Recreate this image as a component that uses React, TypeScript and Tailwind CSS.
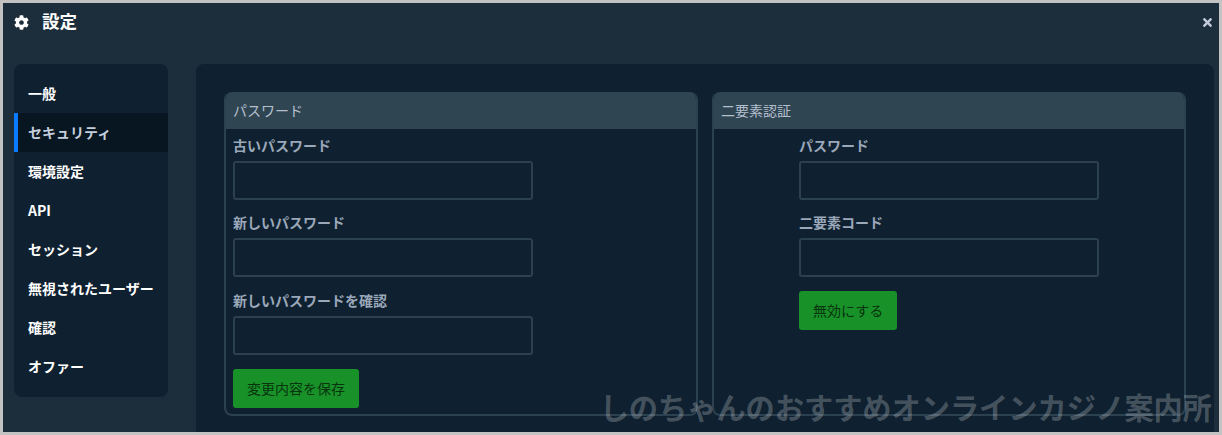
import { FaCog, FaTimes } from "react-icons/fa";

const menuItems = [
  "一般",
  "セキュリティ",
  "環境設定",
  "API",
  "セッション",
  "無視されたユーザー",
  "確認",
  "オファー",
];

function Field({ label }: { label: string }) {
  return (
    <label className="block mb-[10.4px]">
      <span className="block h-[24px] text-[14px] leading-[24px] font-bold text-[#9ba8ba]">
        {label}
      </span>
      <input
        type="password"
        className="block mt-[4px] w-[300px] h-[39px] bg-[#0f2130] border-2 border-[#2c4150] rounded-[3px]"
      />
    </label>
  );
}

function Card({ title, children }: { title: string; children: React.ReactNode }) {
  return (
    <section className="flex-1 h-[324px] border-2 border-t-0 border-[#2c4150] rounded-[8px] overflow-hidden">
      <h2 className="-mx-[2px] h-[37px] px-[9px] bg-[#304552] text-[14px] leading-[37px] font-normal text-[#b4bfce]">
        {title}
      </h2>
      {children}
    </section>
  );
}

export default function App() {
  return (
    <div
      className="relative w-[1222px] h-[435px] overflow-hidden border-[3px] border-[#c3c3c3] bg-[#1c2e3b]"
      style={{ fontFamily: '"Noto Sans CJK JP", "Noto Sans", sans-serif' }}
    >
      <header className="flex items-center h-[38px] pl-[11px] pr-[5px] text-white">
        <FaCog className="w-[15px] h-[15px]" />
        <h1 className="ml-[13px] -translate-y-[1px] text-[17.5px] leading-none font-bold">設定</h1>
        <button className="ml-auto text-[#c2cadb]">
          <FaTimes className="w-[13px] h-[13px]" />
        </button>
      </header>

      <div className="flex items-start mt-[23px] pl-[11px] pr-[5px]">
        <nav className="w-[154px] h-[333px] shrink-0 py-[10px] bg-[#0f2130] rounded-[8px]">
          {menuItems.map((item) => (
            <div
              key={item}
              className={
                item === "セキュリティ"
                  ? "h-[39px] pl-[10px] border-l-4 border-[#0a7bff] bg-[#081622] text-[14px] leading-[38px] font-bold text-[#c4cedc]"
                  : "h-[39px] pl-[14px] text-[14px] leading-[38px] font-bold text-white"
              }
            >
              {item}
            </div>
          ))}
        </nav>

        <main className="flex-1 h-[380px] ml-[28px] px-[28px] pt-[28px] bg-[#0f2130] rounded-t-[8px]">
          <div className="flex gap-[14px]">
            <Card title="パスワード">
              <form className="pl-[7px] pt-[4px]">
                <Field label="古いパスワード" />
                <Field label="新しいパスワード" />
                <Field label="新しいパスワードを確認" />
                <button
                  type="button"
                  className="mt-[14px] block h-[39px] px-[14px] bg-[#189128] rounded-[3px] text-[14px] text-[#08340f]"
                >
                  変更内容を保存
                </button>
              </form>
            </Card>
            <Card title="二要素認証">
              <form className="pl-[85px] pt-[4px]">
                <Field label="パスワード" />
                <Field label="二要素コード" />
                <button
                  type="button"
                  className="mt-[14px] block h-[39px] px-[14px] bg-[#189128] rounded-[3px] text-[14px] text-[#08340f]"
                >
                  無効にする
                </button>
              </form>
            </Card>
          </div>
        </main>
      </div>

      <div className="absolute right-[7px] top-[383px] text-[29.2px] leading-[40px] font-bold whitespace-nowrap text-white/[0.24]">
        しのちゃんのおすすめオンラインカジノ案内所
      </div>
    </div>
  );
}
